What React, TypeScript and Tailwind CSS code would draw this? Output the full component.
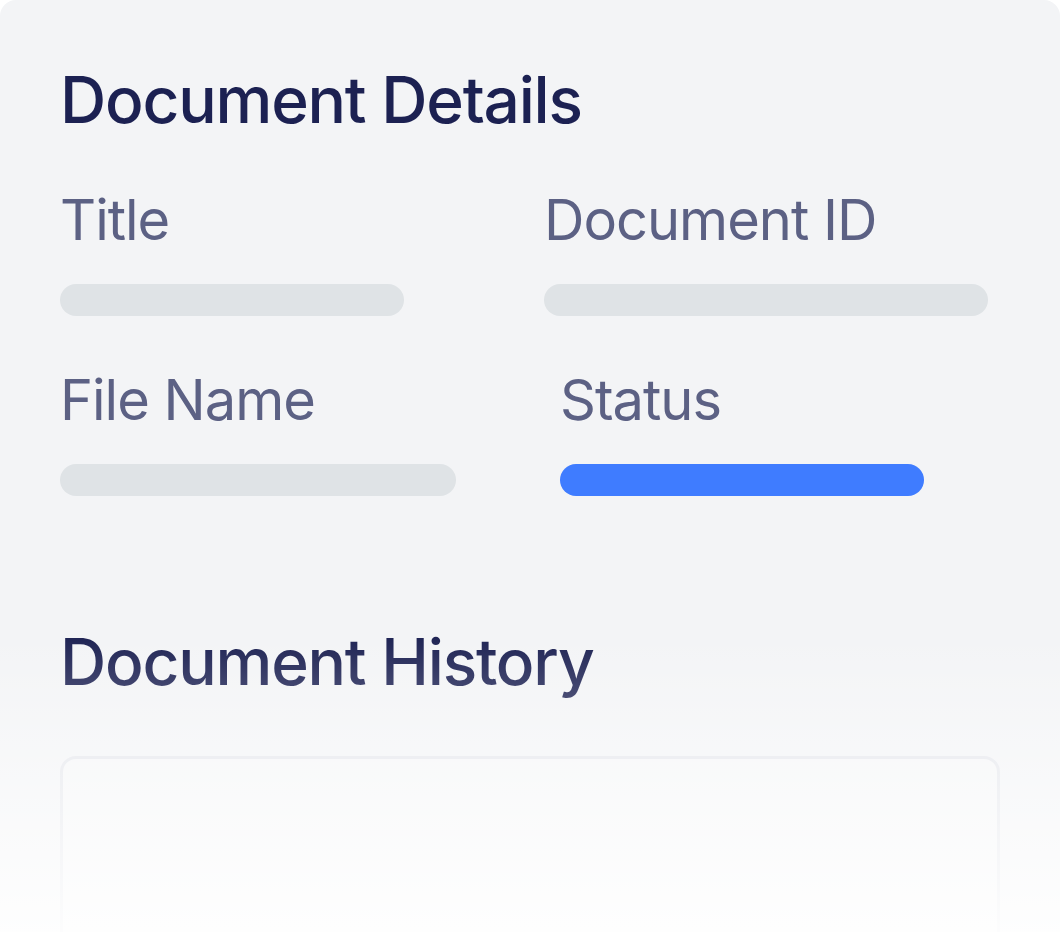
const Field = (props: { label: string; bar: string; barColor?: string; indent?: boolean }) => {
    return (
        <div className={props.indent ? "pl-4" : ""}>
            <p className="text-[56px] leading-none tracking-[-1px] text-[#5c6184]">{props.label}</p>
            <div className={`mt-9 h-8 rounded-full ${props.bar} ${props.barColor ?? "bg-[#dfe3e6]"}`} />
        </div>
    )
}

export default function App() {
    return (
        <div className="min-h-[932px] bg-white" style={{ fontFamily: "Inter, 'Noto Sans', sans-serif" }}>
            <div className="relative h-[932px] overflow-hidden rounded-t-[16px] bg-[#f3f4f6] px-[60px] pt-[68px]">
                <h2 className="text-[64px] font-medium leading-none tracking-[-1.2px] text-[#1c2152]">Document Details</h2>

                <div className="mt-[60px] grid grid-cols-[484px_1fr] gap-y-14">
                    <Field label="Title" bar="w-[344px]" />
                    <Field label="Document ID" bar="w-[444px]" />
                    <Field label="File Name" bar="w-[396px]" />
                    <Field label="Status" bar="w-[364px]" barColor="bg-[#3f7cff]" indent />
                </div>

                <h2 className="mt-[134px] text-[64px] font-medium leading-none tracking-[-1.2px] text-[#1c2152]">Document History</h2>

                <div className="mt-[62px] h-[400px] rounded-[16px] border-[3px] border-[#e4e6eb] bg-[#f5f6f7]" />

                {/* fade to white at the bottom */}
                <div className="pointer-events-none absolute inset-x-0 bottom-0 h-[300px] bg-gradient-to-b from-white/0 to-white/90" />
            </div>
        </div>
    )
}
